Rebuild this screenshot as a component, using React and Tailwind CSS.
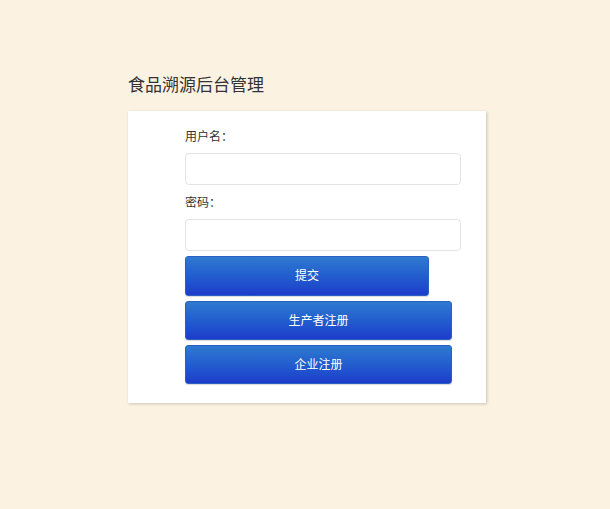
export default function App() {
  const font = { fontFamily: '"Liberation Sans", "Noto Sans CJK SC", sans-serif' };
  const btn =
    'rounded-[3px] border border-[#2a5fc4] bg-gradient-to-b from-[#3079d0] to-[#1e3ccb] text-white text-[12px] flex items-center justify-center shadow-[0_1px_1px_rgba(0,0,0,0.15)]';

  return (
    <div className="min-h-[509px] bg-[#fcf2e1] pt-[75px]" style={font}>
      <div className="ml-[128px] w-[358px]">
        <h1 className="text-[17px] leading-[21px] text-[#333] mb-[15px]">食品溯源后台管理</h1>

        {/* Login card */}
        <div className="bg-white shadow-[1px_1px_3px_rgba(0,0,0,0.2)] pt-[18px] pb-[19px] pl-[57px]">
          <label className="block text-[12px] leading-[16px] text-[#333] mb-[8px]">用户名：</label>
          <input className="block w-[276px] h-[32px] rounded-[4px] border border-[#e3e3e3] bg-white outline-none" />

          <label className="block text-[12px] leading-[16px] text-[#333] mt-[10px] mb-[8px]">密码：</label>
          <input
            type="password"
            className="block w-[276px] h-[32px] rounded-[4px] border border-[#e3e3e3] bg-white outline-none"
          />

          <div className="flex flex-col gap-[5px] mt-[5px]">
            <button className={`${btn} w-[244px] h-[40px]`}>提交</button>
            <button className={`${btn} w-[267px] h-[39px]`}>生产者注册</button>
            <button className={`${btn} w-[267px] h-[39px]`}>企业注册</button>
          </div>
        </div>
      </div>
    </div>
  );
}
